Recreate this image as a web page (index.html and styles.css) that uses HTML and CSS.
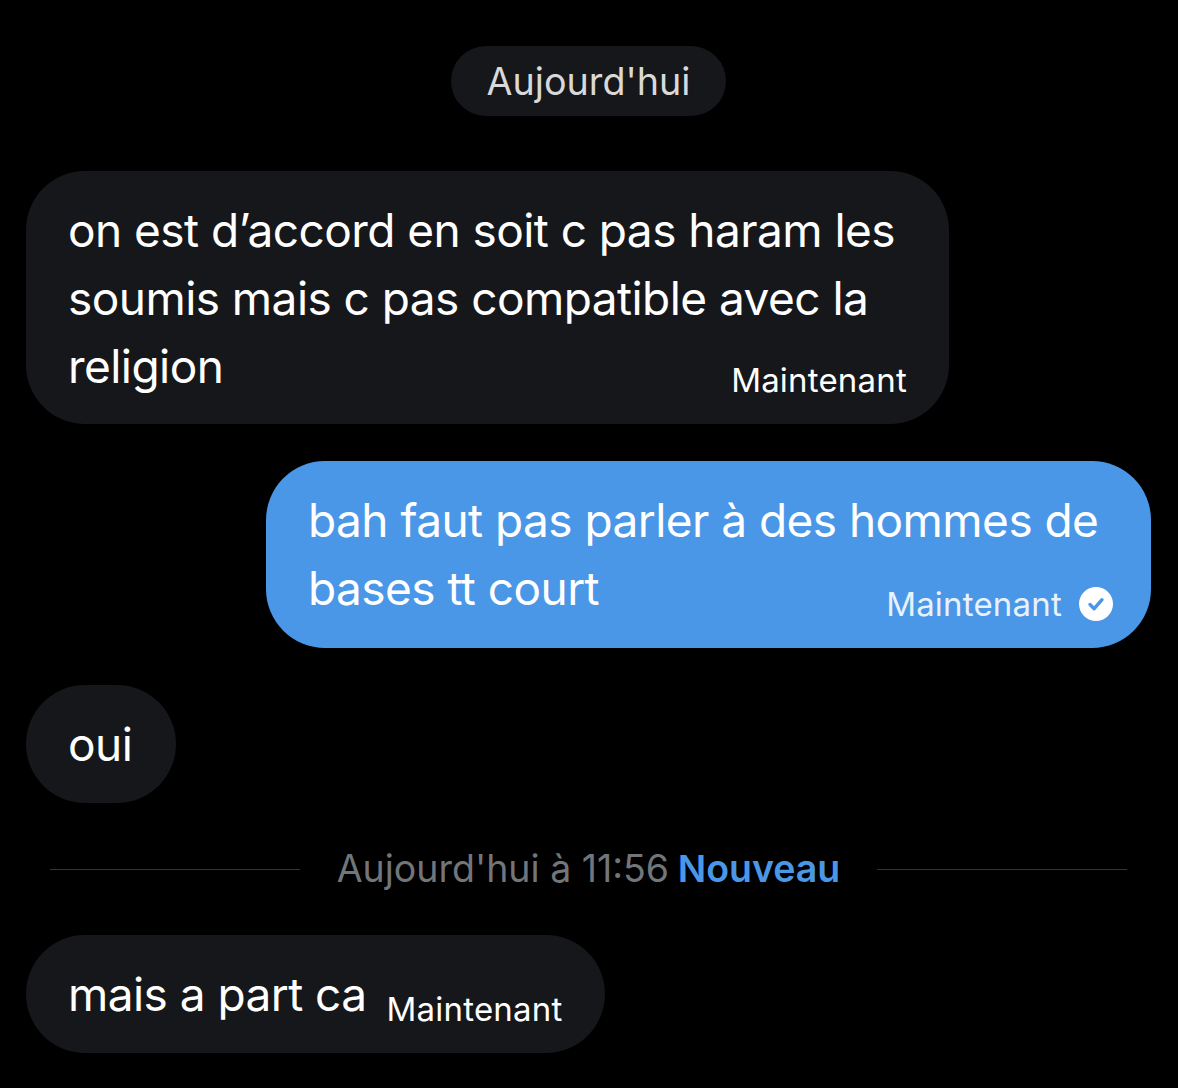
FILE: index.html
```html
<!DOCTYPE html>
<html lang="fr">
<head>
<meta charset="UTF-8">
<meta name="viewport" content="width=device-width, initial-scale=1.0">
<title>Messages</title>
<link rel="stylesheet" href="styles.css">
</head>
<body>
<div class="chat">
    <div class="day-row">
        <span class="day-pill">Aujourd'hui</span>
    </div>

    <div class="msg msg-other msg-first">
        <p class="msg-text">on est d’accord en soit c pas haram les<br>soumis mais c pas compatible avec la<br>religion<span class="msg-time">Maintenant</span></p>
    </div>

    <div class="msg msg-me">
        <p class="msg-text">bah faut pas parler à des hommes de<br>bases tt court<span class="msg-time">Maintenant
            <svg class="check" viewBox="0 0 34 34" aria-hidden="true">
                <circle cx="17" cy="17" r="17" fill="#fff"/>
                <path d="M11 17.5l4.2 4.2 7.8-9" fill="none" stroke="#4a97e8" stroke-width="3.4" stroke-linecap="round" stroke-linejoin="round"/>
            </svg>
        </span></p>
    </div>

    <div class="msg msg-other">
        <p class="msg-text">oui</p>
    </div>

    <div class="separator">
        <span class="separator-line"></span>
        <span class="separator-label">Aujourd'hui à 11:56 <b>Nouveau</b></span>
        <span class="separator-line"></span>
    </div>

    <div class="msg msg-other msg-last">
        <p class="msg-text">mais a part ca<span class="msg-time">Maintenant</span></p>
    </div>
</div>
</body>
</html>
```

FILE: styles.css
```css
html, body {
    margin: 0;
    padding: 0;
    background-color: #000;
}
body {
    font-family: Inter, "Liberation Sans", sans-serif;
    color: #fff;
    width: 1178px;
    height: 1088px;
    overflow: hidden;
}
.chat {
    display: flex;
    flex-direction: column;
    padding: 46px 27px 0 26px;
}
.day-row {
    display: flex;
    justify-content: center;
    margin-bottom: 55px;
}
.day-pill {
    background-color: #16171a;
    color: #d9d9d9;
    font-size: 37.7px;
    line-height: 70px;
    height: 70px;
    padding: 0 36px;
    border-radius: 35px;
}
.msg {
    box-sizing: border-box;
    padding: 25px 44px 25px 42px;
    border-radius: 59px;
    margin-bottom: 37px;
}
.msg-other {
    background-color: #16171a;
    align-self: flex-start;
}
.msg-first {
    width: 923px;
    padding-bottom: 24px;
}
.msg-me {
    background-color: #4a97e8;
    align-self: flex-end;
    width: 885px;
    padding-bottom: 26px;
}
.msg-text {
    margin: 0;
    font-size: 46px;
    line-height: 68px;
    letter-spacing: -0.55px;
}
.msg-time {
    float: right;
    display: flex;
    align-items: center;
    gap: 17px;
    font-size: 33px;
    letter-spacing: 0.2px;
    line-height: 40px;
    margin: 30px -1px -10px 20px;
}
.msg-first .msg-time {
    margin-top: 28px;
    margin-right: -2px;
}
.msg-me .msg-time {
    color: #e8f2fc;
    margin-right: -6px;
}
.msg-last .msg-time {
    margin-top: 29px;
}
.check {
    width: 34px;
    height: 34px;
}
.separator {
    display: flex;
    align-items: center;
    justify-content: space-between;
    padding: 0 24px;
    margin-top: 2px;
    margin-bottom: 39px;
    height: 54px;
}
.separator-line {
    width: 250px;
    height: 1px;
    background-color: #333639;
}
.separator-label {
    color: #71767b;
    font-size: 37.5px;
    line-height: 56px;
}
.separator-label b {
    color: #4a97e8;
    font-weight: 600;
    margin-left: -2px;
}
```
